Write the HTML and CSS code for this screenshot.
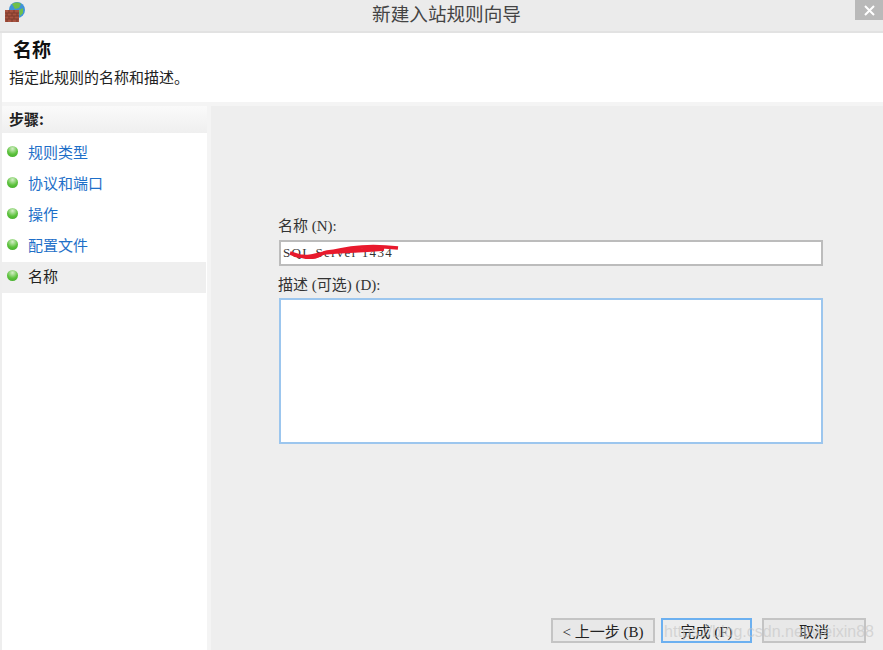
FILE: index.html
```html
<!DOCTYPE html>
<html lang="zh-CN">
  <head>
    <meta charset="UTF-8" />
    <meta name="viewport" content="width=device-width, initial-scale=1.0" />
    <title>新建入站规则向导</title>
    <link rel="stylesheet" href="styles.css">
  </head>
  <body>
    <div class="wizard">
      <div class="title-bar">
        <svg class="app-icon" width="21" height="22" viewBox="0 0 21 22">
          <circle cx="13" cy="9" r="8" fill="#3f93d8" />
          <path d="M8 3c3-2 7-2 9 0l-2 4-4 1z" fill="#6fbf4a" />
          <path d="M15 9l4-2 0 5-3 3z" fill="#6fbf4a" />
          <rect x="1" y="9" width="14" height="12" fill="#a8523f" />
          <path d="M1 12h14M1 15h14M1 18h14M5 9v3M10 9v3M3 12v3M8 12v3M13 12v3M5 15v3M10 15v3M3 18v3M8 18v3M13 18v3" stroke="#7d3a2c" stroke-width="1" fill="none" />
        </svg>
        <span class="title-text">新建入站规则向导</span>
        <div class="close-btn">
          <svg width="11" height="11" viewBox="0 0 11 11">
            <path d="M1 1l9 9M10 1l-9 9" stroke="#fff" stroke-width="2" fill="none" />
          </svg>
        </div>
      </div>

      <div class="page-head">
        <h1>名称</h1>
        <p>指定此规则的名称和描述。</p>
      </div>

      <div class="content">
        <div class="steps">
          <div class="steps-title">步骤:</div>
          <ul class="step-list">
            <li><span class="dot"></span><a>规则类型</a></li>
            <li><span class="dot"></span><a>协议和端口</a></li>
            <li><span class="dot"></span><a>操作</a></li>
            <li><span class="dot"></span><a>配置文件</a></li>
            <li class="current"><span class="dot"></span><a>名称</a></li>
          </ul>
        </div>

        <div class="main">
          <form class="name-form">
            <label>名称 (N):</label>
            <div class="name-field">
              <input type="text" value="SQL Server 1434" />
              <svg class="scribble" width="120" height="20" viewBox="0 0 120 20">
                <path d="M9 12c8 3 18 5 25 4s5-4 12-5c10-1 16-3 24-4 14-2 30-2 47 0M13 14c12 3 20 1 30-2 20-2 40-2 60-4" stroke="#e8192c" stroke-width="3.5" fill="none" />
              </svg>
            </div>
            <label>描述 (可选) (D):</label>
            <textarea></textarea>
          </form>
          <div class="buttons">
            <button type="button">&lt; 上一步 (B)</button>
            <button type="button" class="primary">完成 (F)</button>
            <button type="button" class="cancel">取消</button>
          </div>
          <span class="watermark">https://blog.csdn.net/weixin88</span>
        </div>
      </div>
    </div>
  </body>
</html>
```

FILE: styles.css
```css
* {
  box-sizing: border-box;
}

body {
  margin: 0;
  height: 650px;
  overflow: hidden;
  font-family: "Noto Sans CJK SC", "Liberation Sans", sans-serif;
  font-size: 15px;
  color: #222;
  background-color: #eeeeee;
}

.wizard {
  display: flex;
  flex-direction: column;
  height: 650px;
  padding-left: 2px;
}

.title-bar {
  display: flex;
  align-items: flex-start;
  justify-content: center;
  height: 33px;
  margin-left: -2px;
  padding-left: 10px;
  background-color: #ebebeb;
  border-bottom: 2px solid #e2e2e2;
  position: relative;
}

.app-icon {
  position: absolute;
  left: 4px;
  top: 1px;
}

.title-text {
  font-size: 18.6px;
  line-height: 25px;
  color: #444;
}

.close-btn {
  position: absolute;
  right: 0;
  top: 0;
  width: 28px;
  height: 20px;
  display: flex;
  align-items: center;
  justify-content: center;
  background-color: #b9b9b9;
}

.page-head {
  height: 69px;
  padding: 3px 7px 0;
  background-color: #fff;
}

h1 {
  margin: 0 0 0 4px;
  font-size: 19px;
  line-height: 25px;
  color: #111;
}

.page-head p {
  margin: 5px 0 0;
  line-height: 22px;
  color: #222;
}

.content {
  flex: 1;
  display: flex;
  padding-top: 4px;
  background-color: #f4f4f4;
}

.steps {
  width: 205px;
  background-color: #fff;
}

.steps-title {
  height: 27px;
  padding-left: 7px;
  line-height: 25px;
  font-weight: bold;
  color: #222;
  background: linear-gradient(#fafafa, #efefef);
}

.step-list {
  list-style: none;
  margin: 5px 0 0;
  padding: 0;
  width: 204px;
}

.step-list li {
  display: flex;
  align-items: center;
  height: 31px;
  padding-left: 5px;
}

.step-list a {
  color: #1e6fc8;
  margin: -5px 0 0 10px;
}

.step-list .current {
  background-color: #efefef;
}

.step-list .current a {
  color: #222;
}

.dot {
  width: 11px;
  height: 11px;
  margin-top: -4px;
  border-radius: 50%;
  background: radial-gradient(circle at 50% 25%, #d5eec8, #5cc23c 55%, #3fa82a);
}

.main {
  flex: 1;
  display: flex;
  flex-direction: column;
  margin-left: 4px;
  padding: 110px 17px 7px 67px;
  background-color: #eeeeee;
  position: relative;
}

.name-form {
  display: flex;
  flex-direction: column;
  padding-right: 43px;
}

label {
  height: 20px;
  line-height: 20px;
  color: #333;
  font-family: "Liberation Serif", "Noto Sans CJK SC", serif;
  font-size: 15px;
}

.name-field {
  position: relative;
  margin: 4px 0 9px 1px;
}

input {
  display: block;
  width: 100%;
  height: 26px;
  padding: 0 2px;
  font-family: "Liberation Serif", serif;
  font-size: 13px;
  letter-spacing: 1.3px;
  color: #333;
  background-color: #fff;
  border: 2px solid #bcbcbc;
  outline: none;
}

.scribble {
  position: absolute;
  left: 2px;
  top: 1px;
}

textarea {
  display: block;
  height: 146px;
  margin: 3px 0 0 1px;
  width: calc(100% - 1px);
  background-color: #fff;
  border: 2px solid #9cc6ee;
  resize: none;
  outline: none;
}

.buttons {
  display: flex;
  justify-content: flex-end;
  gap: 8px;
  margin-top: auto;
}

button {
  height: 25px;
  width: 104px;
  padding: 2px 0 0;
  font-family: "Liberation Serif", "Noto Sans CJK SC", serif;
  font-size: 15px;
  line-height: 20px;
  color: #222;
  background-color: #e8e8e8;
  border: 2px solid #c4c4c4;
}

button.primary {
  width: 91px;
  margin-left: -2px;
  border-color: #6cb0f0;
  background-color: #ececec;
}

button.cancel {
  margin-left: 2px;
}

.watermark {
  position: absolute;
  right: 9px;
  bottom: 9px;
  font-family: "Liberation Sans", sans-serif;
  font-size: 16px;
  color: rgba(195, 195, 195, 0.6);
}
```
